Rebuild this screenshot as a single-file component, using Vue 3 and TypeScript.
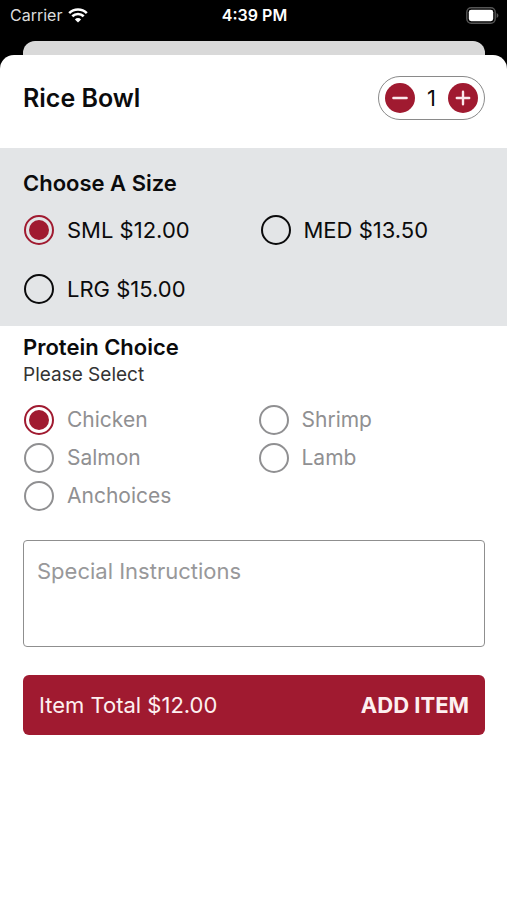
<script setup lang="ts">
import { computed, ref } from 'vue'

interface SizeOption {
  id: string
  label: string
  price: number
}

const sizes: SizeOption[] = [
  { id: 'sml', label: 'SML', price: 12 },
  { id: 'med', label: 'MED', price: 13.5 },
  { id: 'lrg', label: 'LRG', price: 15 },
]
const proteins: string[] = ['Chicken', 'Shrimp', 'Salmon', 'Lamb', 'Anchoices']

const quantity = ref(1)
const size = ref('sml')
const protein = ref('Chicken')
const instructions = ref('')

const money = (value: number): string => `$${value.toFixed(2)}`

const total = computed(() => {
  const chosen = sizes.find((option) => option.id === size.value)
  return money((chosen ? chosen.price : 0) * quantity.value)
})

function decrease(): void {
  quantity.value = Math.max(1, quantity.value - 1)
}

function increase(): void {
  quantity.value += 1
}
</script>

<template>
  <div class="screen">
    <header class="status">
      <div class="carrier">
        <span>Carrier</span>
        <svg class="wifi" viewBox="0 0 20 15" aria-hidden="true">
          <path d="M1.2 5.1a12.6 12.6 0 0 1 17.6 0" />
          <path d="M4.3 8.3a8.2 8.2 0 0 1 11.4 0" />
          <path class="wifi-dot" d="M10 14.6 6.9 11.4a4.4 4.4 0 0 1 6.2 0Z" />
        </svg>
      </div>
      <time class="clock">4:39 PM</time>
      <svg class="battery" viewBox="0 0 33 17" aria-hidden="true">
        <rect class="battery-shell" x="0.8" y="0.8" width="28.4" height="15.4" rx="4.4" />
        <rect class="battery-level" x="2.8" y="2.8" width="24.4" height="11.4" rx="2.4" />
        <path class="battery-tip" d="M30.6 6v5c1-.4 1.8-1.3 1.8-2.5S31.6 6.4 30.6 6Z" />
      </svg>
    </header>

    <div class="card-behind"></div>

    <main class="sheet">
      <div class="heading">
        <h1>Rice Bowl</h1>
        <div class="stepper">
          <button type="button" aria-label="Decrease quantity" @click="decrease">
            <svg viewBox="0 0 30 30" aria-hidden="true"><path d="M8.4 15h13.2" /></svg>
          </button>
          <output>{{ quantity }}</output>
          <button type="button" aria-label="Increase quantity" @click="increase">
            <svg viewBox="0 0 30 30" aria-hidden="true"><path d="M8.8 15h12.4M15 8.8v12.4" /></svg>
          </button>
        </div>
      </div>

      <section class="sizes" role="radiogroup" aria-labelledby="size-title">
        <h2 id="size-title">Choose A Size</h2>
        <div class="options size-options">
          <label v-for="option in sizes" :key="option.id" class="option">
            <input v-model="size" type="radio" name="size" :value="option.id" />
            <span>{{ option.label }} {{ money(option.price) }}</span>
          </label>
        </div>
      </section>

      <section class="proteins" role="radiogroup" aria-labelledby="protein-title">
        <h2 id="protein-title">Protein Choice</h2>
        <p>Please Select</p>
        <div class="options protein-options">
          <label v-for="name in proteins" :key="name" class="option">
            <input v-model="protein" type="radio" name="protein" :value="name" />
            <span>{{ name }}</span>
          </label>
        </div>
      </section>

      <div class="order">
        <textarea
          v-model="instructions"
          aria-label="Special Instructions"
          placeholder="Special Instructions"
        ></textarea>
        <button type="button" class="add">
          <span>Item Total {{ total }}</span>
          <strong>ADD ITEM</strong>
        </button>
      </div>
    </main>
  </div>
</template>

<style>
body {
  margin: 0;
  background: #000;
}
</style>

<style scoped>
.screen {
  display: flex;
  flex-direction: column;
  min-height: 100vh;
  background: #000;
  color: #0b0b0c;
  font-family: Inter, Roboto, "Liberation Sans", sans-serif;
  font-size: 22px;
  line-height: 30px;
}

.screen *,
.screen *::before {
  box-sizing: border-box;
}

.status {
  display: grid;
  grid-template-columns: 1fr auto 1fr;
  align-items: center;
  height: 30px;
  padding: 0 8px 0 10px;
  color: #fff;
  font-size: 16px;
}

.carrier {
  display: flex;
  align-items: center;
  gap: 6px;
  color: #dcdcdc;
}

.wifi {
  width: 20px;
  height: 15px;
  fill: none;
  stroke: #fff;
  stroke-width: 2.6;
}

.wifi-dot {
  fill: #fff;
  stroke: none;
}

.clock {
  font-weight: 600;
}

.battery {
  justify-self: end;
  width: 33px;
  height: 17px;
}

.battery-shell {
  fill: none;
  stroke: #555;
  stroke-width: 1.4;
}

.battery-level {
  fill: #fff;
}

.battery-tip {
  fill: #555;
}

.card-behind {
  height: 14px;
  margin: 11px 22px 0 23px;
  border-radius: 12px 12px 0 0;
  background: #d9d9d9;
}

.sheet {
  flex: 1;
  border-radius: 14px 14px 0 0;
  background: #fff;
}

h1,
h2,
p {
  margin: 0;
}

.heading {
  display: flex;
  align-items: center;
  justify-content: space-between;
  padding: 21px 22px 28px 23px;
}

h1 {
  font-size: 25px;
  font-weight: 600;
}

h2 {
  font-size: 22px;
  font-weight: 600;
  line-height: 28px;
}

.stepper {
  display: flex;
  align-items: center;
  padding: 6px;
  border: 1px solid #8a8a8a;
  border-radius: 22px;
}

.stepper button {
  width: 30px;
  height: 30px;
  padding: 0;
  border: 0;
  border-radius: 50%;
  background: #a01a30;
}

.stepper svg {
  display: block;
  fill: none;
  stroke: #fbe9ec;
  stroke-width: 2.4;
  stroke-linecap: round;
}

.stepper output {
  min-width: 33px;
  text-align: center;
}

.sizes {
  padding: 21px 22px 22px 23px;
  background: #e3e5e7;
}

.proteins {
  padding: 7px 22px 0 23px;
}

.proteins p {
  color: #333;
  font-size: 19px;
  line-height: 27px;
}

.options {
  display: grid;
  grid-template-columns: 1fr 1fr;
  padding-left: 1px;
}

.size-options {
  gap: 29px 12px;
  margin-top: 18px;
}

.protein-options {
  gap: 8px;
  margin-top: 17px;
  color: #909092;
  font-size: 21px;
}

.option {
  display: flex;
  align-items: center;
  gap: 13px;
}

.option input {
  display: grid;
  flex: none;
  place-items: center;
  width: 30px;
  height: 30px;
  margin: 0;
  border: 2px solid currentColor;
  border-radius: 50%;
  appearance: none;
  color: inherit;
}

.option input:checked {
  border-color: #a01a30;
}

.option input:checked::before {
  content: "";
  width: 20px;
  height: 20px;
  border-radius: 50%;
  background: #a01a30;
}

.order {
  display: flex;
  flex-direction: column;
  gap: 28px;
  padding: 29px 22px 28px 23px;
}

textarea {
  width: 100%;
  height: 107px;
  padding: 15px 13px;
  border: 1px solid #8f8f8f;
  border-radius: 4px;
  background: #fff;
  color: #0b0b0c;
  font: inherit;
  resize: none;
}

textarea::placeholder {
  color: #98989a;
  opacity: 1;
}

.add {
  display: flex;
  align-items: center;
  justify-content: space-between;
  width: 100%;
  height: 60px;
  padding: 0 16px;
  border: 0;
  border-radius: 6px;
  background: #a01a30;
  color: #fdf0f0;
  font: inherit;
}

.add strong {
  font-weight: 700;
}
</style>
